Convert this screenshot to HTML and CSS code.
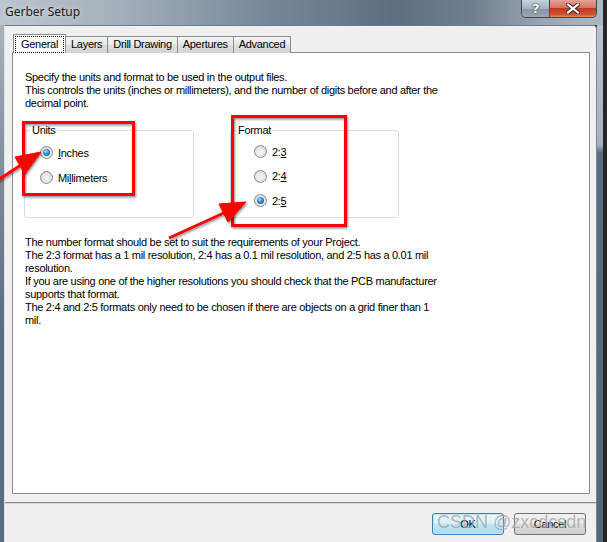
FILE: index.html
```html
<html>
    <head>
        <title>Gerber Setup</title>
        <link rel="stylesheet" href="styles.css">
    </head>
    <body>
        <div class="window">
            <div class="titlebar">
                <span class="title">Gerber Setup</span>
                <div class="caption-btns">
                    <span class="cap-help">?</span>
                    <span class="cap-close">
                        <svg width="14" height="11" viewBox="0 0 14 11">
                            <path d="M2 1.5 L12 9.5 M12 1.5 L2 9.5" stroke="#3a2a28" stroke-width="4.2" stroke-linecap="square"/>
                            <path d="M2 1.5 L12 9.5 M12 1.5 L2 9.5" stroke="#ffffff" stroke-width="2.2" stroke-linecap="square"/>
                        </svg>
                    </span>
                </div>
            </div>

            <div class="frame">
                <div class="edge-left"></div>
                <div class="client">
                    <div class="tabs">
                        <div class="tab active"><span class="focus">General</span></div>
                        <div class="tab">Layers</div>
                        <div class="tab">Drill Drawing</div>
                        <div class="tab">Apertures</div>
                        <div class="tab">Advanced</div>
                    </div>

                    <div class="page">
                        <p class="intro">
                            Specify the units and format to be used in the output files.<br>
                            This controls the units (inches or millimeters), and the number of digits before and after the<br>
                            decimal point.
                        </p>

                        <div class="groups">
                            <fieldset class="group units">
                                <legend>Units</legend>
                                <div class="option"><span class="radio checked"></span><span><u>I</u>nches</span></div>
                                <div class="option"><span class="radio"></span><span>Mi<u>l</u>limeters</span></div>
                            </fieldset>
                            <fieldset class="group format">
                                <legend>Format</legend>
                                <div class="option"><span class="radio"></span><span>2:<u>3</u></span></div>
                                <div class="option"><span class="radio"></span><span>2:<u>4</u></span></div>
                                <div class="option"><span class="radio checked"></span><span>2:<u>5</u></span></div>
                            </fieldset>
                        </div>

                        <p class="notes">
                            The number format should be set to suit the requirements of your Project.<br>
                            The 2:3 format has a 1 mil resolution, 2:4 has a 0.1 mil resolution, and 2:5 has a 0.01 mil<br>
                            resolution.<br>
                            If you are using one of the higher resolutions you should check that the PCB manufacturer<br>
                            supports that format.<br>
                            The 2:4 and 2:5 formats only need to be chosen if there are objects on a grid finer than 1<br>
                            mil.
                        </p>
                    </div>

                    <div class="footer">
                        <button class="default">OK</button>
                        <button>Cancel</button>
                    </div>
                </div>
                <div class="edge-right"></div>
            </div>

            <!-- red annotations drawn over the dialog -->
            <svg class="annot" width="607" height="542" viewBox="0 0 607 542">
                <defs>
                    <filter id="shade" x="-10%" y="-10%" width="130%" height="130%">
                        <feDropShadow dx="1" dy="1.5" stdDeviation="1" flood-color="#000" flood-opacity="0.45"/>
                    </filter>
                </defs>
                <g filter="url(#shade)" fill="none" stroke="#ff0000" stroke-width="3">
                    <rect x="23.5" y="122.5" width="110" height="72"/>
                    <rect x="232.5" y="116.5" width="113" height="109"/>
                </g>
                <g filter="url(#shade)" fill="#ff0000" stroke="#ff0000">
                    <line x1="-2" y1="180" x2="24" y2="163" stroke-width="3"/>
                    <polygon points="41,152 15,157 25,174" stroke-width="1"/>
                    <line x1="169" y1="238" x2="226" y2="212" stroke-width="3"/>
                    <polygon points="246,202 219,204 228,222" stroke-width="1"/>
                </g>
            </svg>

            <div class="watermark">CSDN @zxcdcsdn</div>
        </div>
    </body>
</html>
```

FILE: styles.css
```css
body {
    margin: 0;
    padding: 0;
    width: 607px;
    height: 542px;
    overflow: hidden;
    background-color: #262626;
    font-family: "Liberation Sans", Arial, sans-serif;
    font-size: 11px;
    letter-spacing: -0.3px;
    color: #000;
}

.window {
    position: relative;
    width: 603px;
    height: 542px;
    display: flex;
    flex-direction: column;
}

/* title bar */
.titlebar {
    height: 25px;
    display: flex;
    align-items: flex-start;
    padding: 0 6px 0 5px;
    background: linear-gradient(90deg, #bcc6cf 0%, #a3afba 20%, #76879a 45%, #5f6f81 65%, #6f7e8e 78%, #9aa6b2 90%, #aeb8c2 100%);
}

.title {
    font-family: "Noto Sans", "Open Sans", sans-serif;
    font-size: 12px;
    letter-spacing: 0;
    line-height: 24px;
    color: #1c1c1c;
    text-shadow: 0 0 6px rgba(255, 255, 255, 0.7);
}

.caption-btns {
    margin-left: auto;
    display: flex;
    height: 17px;
    border: 1px solid #3d4854;
    border-top: none;
    border-radius: 0 0 5px 5px;
    overflow: hidden;
}

.cap-help {
    width: 27px;
    display: flex;
    align-items: center;
    justify-content: center;
    font-family: "DejaVu Sans", sans-serif;
    font-weight: bold;
    font-size: 13px;
    color: #fff;
    text-shadow: 0 0 2px #2c3640, 0 0 1px #2c3640;
    background: linear-gradient(#c9d2da, #a5b1bc 50%, #8796a5 51%, #9aa8b5);
    border-right: 1px solid #3d4854;
}

.cap-close {
    width: 46px;
    display: flex;
    align-items: center;
    justify-content: center;
    background: linear-gradient(#e6a193, #d47560 45%, #c2391e 50%, #cf5434 85%, #e28a63);
}

/* frame and client area */
.frame {
    flex: 1;
    display: flex;
}

.edge-left {
    width: 4px;
    background: linear-gradient(#a7b2bd, #7c8a99 30%, #5b6b7f 60%);
}

.edge-right {
    width: 6px;
    background: linear-gradient(#bac4cd, #a6b1bc 120px, #5c6c80 128px, #566679);
}

.client {
    flex: 1;
    display: flex;
    flex-direction: column;
    background-color: #f0f0f0;
    border-top: 1px solid #6e7c8a;
    border-right: 1px solid #7c8896;
    border-left: 1px solid #dfe3e7;
    border-radius: 0 4px 0 0;
    padding: 8px 6px 0 7px;
}

/* tabs */
.tabs {
    display: flex;
    align-items: flex-start;
    height: 19px;
    padding-left: 1px;
    position: relative;
    z-index: 1;
}

.tab {
    margin-top: 2px;
    height: 16px;
    line-height: 15px;
    padding: 0 5px;
    border: 1px solid #898c95;
    border-bottom: none;
    border-left: none;
    background: linear-gradient(#f3f3f3, #ebebeb 45%, #dedede 50%, #d4d4d4);
    white-space: nowrap;
}

.tab.active {
    margin-top: 0;
    height: 19px;
    padding: 1px 1px 0 1px;
    border-left: 1px solid #898c95;
    background: #fff;
    box-sizing: border-box;
}

.focus {
    display: block;
    padding: 0 5px;
    line-height: 15px;
    border: 1px dotted #000;
}

.page {
    height: 442px;
    box-sizing: border-box;
    margin-top: -1px;
    background-color: #fff;
    border: 1px solid #898c95;
    padding: 18px 12px 0 12px;
}

.intro,
.notes {
    margin: 0;
    line-height: 13px;
}

/* group boxes */
.groups {
    display: flex;
    gap: 36px;
    margin: 14px 0 0 -1px;
}

.group {
    margin: 0;
    border: 1px solid #d5dfe5;
    border-radius: 3px;
    padding: 7px 6px 0 5px;
    box-sizing: border-box;
    display: flex;
    flex-direction: column;
}

.group legend {
    padding: 0 2px;
    line-height: 13px;
}

.units {
    width: 170px;
    height: 94px;
    gap: 8px;
}

.units .option {
    margin-left: 10px;
}

.format {
    width: 169px;
    height: 94px;
    gap: 7.5px;
    padding-top: 6px;
}

.format .option {
    margin-left: 18px;
}

.option {
    display: flex;
    align-items: center;
    height: 17px;
    gap: 5px;
}

.radio {
    width: 13px;
    height: 13px;
    box-sizing: border-box;
    border-radius: 50%;
    border: 1px solid #8d8d8d;
    background: radial-gradient(circle at 50% 55%, #f6f6f6 0%, #e4e4e4 55%, #c9c9c9 100%);
    display: flex;
    align-items: center;
    justify-content: center;
}

.radio.checked::after {
    content: "";
    width: 7px;
    height: 7px;
    border-radius: 50%;
    background: radial-gradient(circle at 40% 35%, #b7e2ff 0%, #3b97dc 35%, #0f4f85 100%);
}

.notes {
    margin-top: 18px;
}

/* bottom buttons */
.footer {
    margin-top: 8px;
    border-top: 1px solid #8a8a8a;
    box-shadow: inset 0 1px 0 #d6d6d6;
    display: flex;
    justify-content: flex-end;
    gap: 10px;
    padding: 10px 10px 0 0;
    margin-left: -7px;
    margin-right: -6px;
}

.footer button {
    width: 72px;
    height: 22px;
    font-family: "Liberation Sans", Arial, sans-serif;
    font-size: 11px;
    letter-spacing: -0.3px;
    border: 1px solid #707070;
    border-radius: 3px;
    background: linear-gradient(#f2f2f2, #ebebeb 45%, #dddddd 50%, #cfcfcf);
    color: #000;
    padding: 0;
}

.footer button.default {
    border-color: #3c7fb1;
    box-shadow: inset 0 0 0 1px #bfe6fc;
    background: linear-gradient(#eaf6fd, #d9f0fc 45%, #bee6fd 50%, #a7d9f5);
}

/* overlays */
.annot {
    position: absolute;
    left: 0;
    top: 0;
    pointer-events: none;
}

.watermark {
    position: absolute;
    left: 437px;
    top: 512px;
    font-family: "Liberation Sans", Arial, sans-serif;
    font-size: 18px;
    letter-spacing: 0;
    color: rgba(120, 120, 120, 0.55);
    text-shadow: 0 0 1px rgba(255, 255, 255, 0.6);
    pointer-events: none;
}
```
